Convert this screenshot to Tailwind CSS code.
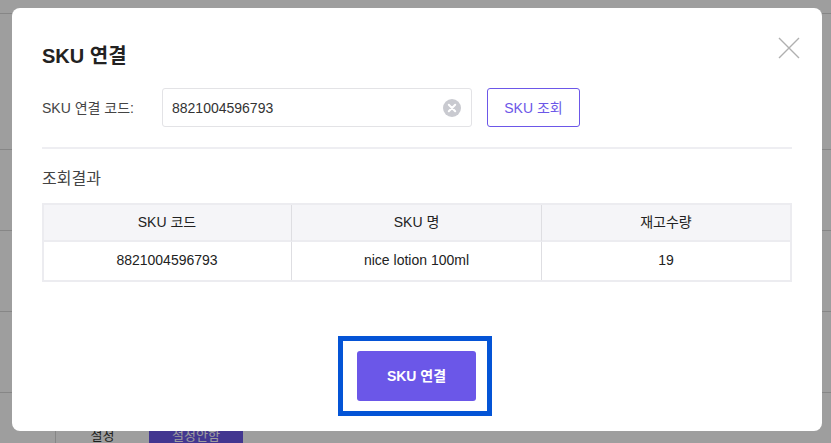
<!DOCTYPE html>
<html lang="ko">
<head>
<meta charset="utf-8">
<script src="https://cdn.jsdelivr.net/npm/@tailwindcss/browser@4"></script>
</head>
<body class="m-0 overflow-hidden font-['Liberation_Sans','Noto_Sans_CJK_KR',sans-serif]">
<div class="relative w-[831px] h-[443px] overflow-hidden bg-white">
  <!-- page behind the dimmer -->
  <div class="flex flex-col">
    <div class="h-[13px] border-b border-[#d9d9d9] box-content"></div>
    <div class="h-[135px] border-b border-[#d9d9d9] box-content"></div>
    <div class="h-[80px] border-b border-[#d9d9d9] box-content"></div>
    <div class="h-[80px] border-b border-[#d9d9d9] box-content"></div>
    <div class="h-[80px] border-b border-[#d9d9d9] box-content"></div>
    <div class="flex h-[50px] pl-[55px]">
      <div class="w-[94px] border-l border-[#d9d9d9] flex justify-center pt-[33px] text-[13px] leading-[20px] text-[#333]">설정</div>
      <div class="w-[94px] bg-[#6b57e8] flex justify-center pt-[33px] text-[13px] leading-[20px] text-white">설정안함</div>
    </div>
  </div>
  <div class="absolute inset-0 bg-black/38"></div>

  <!-- modal -->
  <div class="absolute left-[12px] top-[8px] w-[810px] h-[423px] bg-white rounded-[8px] pl-[30px] pr-[30px] flex flex-col text-[#333]">
    <h2 class="m-0 mt-[35px] mb-[1px] text-[20px] leading-[26px] font-bold text-[#222]">SKU 연결</h2>
    <button class="absolute right-[22px] top-[29px] w-[22px] h-[22px] p-0 bg-transparent" aria-label="닫기">
      <svg width="22" height="22" viewBox="0 0 22 22" fill="none" stroke="#b0b0b0" stroke-width="1.4"><path d="M1 1 L21 21 M21 1 L1 21"/></svg>
    </button>

    <div class="flex items-center mt-[18px] h-[39px]">
      <label class="w-[120px] pt-[2px] text-[14px] text-[#444]">SKU 연결 코드:</label>
      <div class="w-[310px] h-[39px] border border-[#e3e3e6] rounded-[3px] flex items-center justify-between pl-[9px] pr-[10px]">
        <span class="pt-[2px] text-[14px] text-[#333]">8821004596793</span>
        <svg width="18" height="18" viewBox="0 0 18 18"><circle cx="9" cy="9" r="9" fill="#c9cad0"/><path d="M5.8 5.8 L12.2 12.2 M12.2 5.8 L5.8 12.2" stroke="#fff" stroke-width="2" stroke-linecap="round"/></svg>
      </div>
      <button class="ml-[15px] w-[93px] h-[39px] pt-[1px] border border-[#6c57e8] rounded-[3px] text-[14px] text-[#6c57e8] bg-white">SKU 조회</button>
    </div>

    <div class="mt-[20px] h-[2px] w-[750px] bg-[#eeeef2]"></div>

    <div class="mt-[20px] text-[16px] leading-[20px] text-[#444]">조회결과</div>

    <div class="mt-[14px] w-[750px] border-2 border-[#ececf0] grid grid-cols-[248px_250px_1fr] text-[14px] text-[#222] text-center">
      <div class="h-[37px] pb-[1px] pr-[1px] bg-[#f5f5f8] border-r border-[#dedee2] border-b-2 border-b-[#ececf0] flex items-center justify-center">SKU 코드</div>
      <div class="h-[37px] pb-[1px] bg-[#f5f5f8] border-r border-[#dedee2] border-b-2 border-b-[#ececf0] flex items-center justify-center">SKU 명</div>
      <div class="h-[37px] pb-[1px] bg-[#f5f5f8] border-b-2 border-b-[#ececf0] flex items-center justify-center">재고수량</div>
      <div class="h-[38px] pb-[2px] pr-[1px] border-r border-[#dedee2] flex items-center justify-center">8821004596793</div>
      <div class="h-[38px] pb-[2px] border-r border-[#dedee2] flex items-center justify-center">nice lotion 100ml</div>
      <div class="h-[38px] pb-[2px] flex items-center justify-center">19</div>
    </div>

    <div class="mt-[54px] ml-[296px] w-[154px] h-[80px] border-[5px] border-[#0454d6] flex items-center pl-[14px]">
      <button class="w-[119px] h-[50px] pt-[1px] bg-[#6b57e8] rounded-[3px] text-white text-[14px] font-bold">SKU 연결</button>
    </div>
  </div>
</div>
</body>
</html>
